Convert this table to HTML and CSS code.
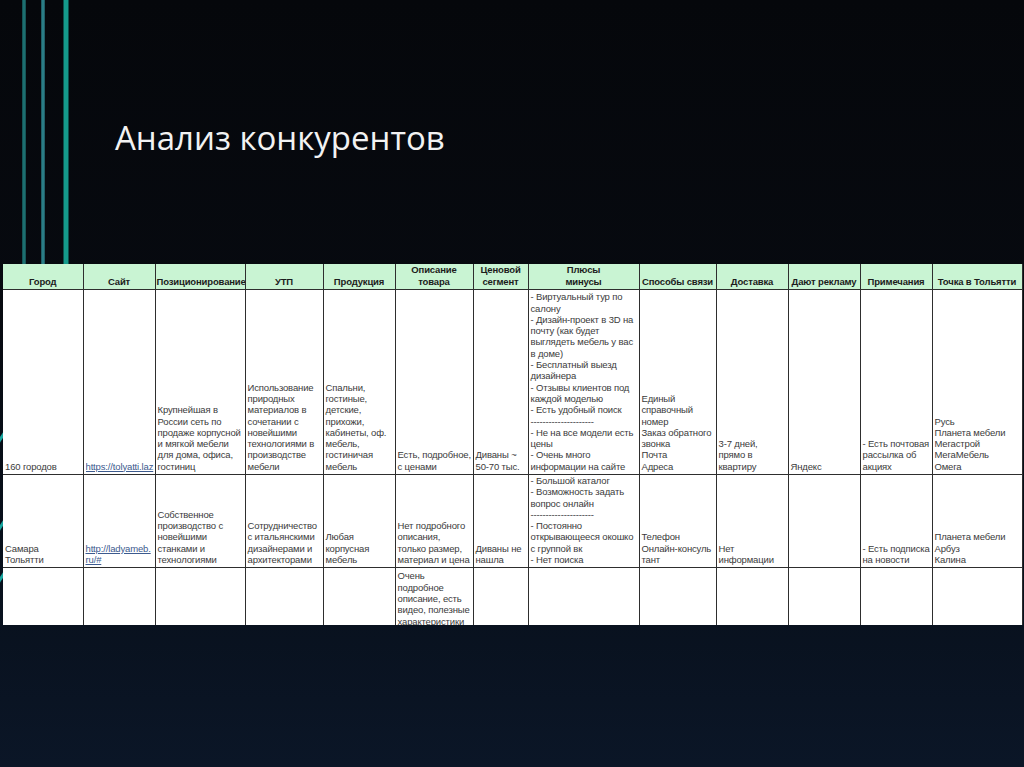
FILE: index.html
```html
<!DOCTYPE html>
<html lang="ru">
<head>
<meta charset="utf-8">
<title>Анализ конкурентов</title>
<link rel="stylesheet" href="styles.css">
</head>
<body>
<div class="slide">
  <svg class="deco" width="1024" height="767" viewBox="0 0 1024 767" aria-hidden="true">
    <line x1="24" y1="0" x2="24" y2="265" stroke="#1c6f70" stroke-width="3.5"/>
    <line x1="43" y1="0" x2="43" y2="265" stroke="#2a7d86" stroke-width="3.5"/>
    <line x1="66" y1="0" x2="66" y2="265" stroke="#159a8b" stroke-width="5"/>
    <line x1="-8" y1="452" x2="14" y2="418" stroke="#18a6a0" stroke-width="3"/>
    <line x1="-8" y1="540" x2="14" y2="506" stroke="#18a6a0" stroke-width="3"/>
    <line x1="-8" y1="592" x2="14" y2="558" stroke="#18a6a0" stroke-width="3"/>
  </svg>
  <h1 class="title">Анализ конкурентов</h1>
  <div class="table-wrap">
    <table class="grid">
      <colgroup>
        <col style="width:80px"><col style="width:72px"><col style="width:90px"><col style="width:78px">
        <col style="width:72px"><col style="width:78px"><col style="width:55px"><col style="width:111px">
        <col style="width:77px"><col style="width:72px"><col style="width:72px"><col style="width:72px">
        <col style="width:90px">
      </colgroup>
      <thead>
        <tr>
          <th>Город</th><th>Сайт</th><th>Позиционирование</th><th>УТП</th><th>Продукция</th>
          <th>Описание<br>товара</th><th>Ценовой<br>сегмент</th><th>Плюсы<br>минусы</th>
          <th>Способы связи</th><th>Доставка</th><th>Дают рекламу</th><th>Примечания</th><th>Точка в Тольятти</th>
        </tr>
      </thead>
      <tbody>
        <tr class="r1">
          <td>160 городов</td>
          <td><div class="clip"><span class="link">https://tolyatti.laz</span></div></td>
          <td>Крупнейшая в<br>России сеть по<br>продаже корпусной<br>и мягкой мебели<br>для дома, офиса,<br>гостиниц</td>
          <td>Использование<br>природных<br>материалов в<br>сочетании с<br>новейшими<br>технологиями в<br>производстве<br>мебели</td>
          <td>Спальни,<br>гостиные,<br>детские,<br>прихожи,<br>кабинеты, оф.<br>мебель,<br>гостиничая<br>мебель</td>
          <td>Есть, подробное,<br>с ценами</td>
          <td>Диваны ~<br>50-70 тыс.</td>
          <td>- Виртуальный тур по<br>салону<br>- Дизайн-проект в 3D на<br>почту (как будет<br>выглядеть мебель у вас<br>в доме)<br>- Бесплатный выезд<br>дизайнера<br>- Отзывы клиентов под<br>каждой моделью<br>- Есть удобный поиск<br>---------------------<br>- Не на все модели есть<br>цены<br>- Очень много<br>информации на сайте</td>
          <td>Единый<br>справочный<br>номер<br>Заказ обратного<br>звонка<br>Почта<br>Адреса</td>
          <td>3-7 дней,<br>прямо в<br>квартиру</td>
          <td>Яндекс</td>
          <td>- Есть почтовая<br>рассылка об<br>акциях</td>
          <td>Русь<br>Планета мебели<br>Мегастрой<br>МегаМебель<br>Омега</td>
        </tr>
        <tr class="r2">
          <td>Самара<br>Тольятти</td>
          <td><span class="link">http://ladyameb.</span><br><span class="link">ru/#</span></td>
          <td>Собственное<br>производство с<br>новейшими<br>станками и<br>технологиями</td>
          <td>Сотрудничество<br>с итальянскими<br>дизайнерами и<br>архитекторами</td>
          <td>Любая<br>корпусная<br>мебель</td>
          <td>Нет подробного<br>описания,<br>только размер,<br>материал и цена</td>
          <td>Диваны не<br>нашла</td>
          <td>- Большой каталог<br>- Возможность задать<br>вопрос онлайн<br>---------------------<br>- Постоянно<br>открывающееся окошко<br>с группой вк<br>- Нет поиска</td>
          <td>Телефон<br>Онлайн-консуль<br>тант</td>
          <td>Нет<br>информации</td>
          <td></td>
          <td>- Есть подписка<br>на новости</td>
          <td>Планета мебели<br>Арбуз<br>Калина</td>
        </tr>
        <tr class="r3">
          <td></td><td></td><td></td><td></td><td></td>
          <td>Очень<br>подробное<br>описание, есть<br>видео, полезные<br>характеристики</td>
          <td></td><td></td><td></td><td></td><td></td><td></td><td></td>
        </tr>
      </tbody>
    </table>
  </div>
</div>
</body>
</html>
```

FILE: styles.css
```css
html, body {
  margin: 0;
  padding: 0;
}
body {
  width: 1024px;
  height: 767px;
  overflow: hidden;
  background: #05070b;
}
.slide {
  position: relative;
  width: 1024px;
  height: 767px;
  overflow: hidden;
  background: linear-gradient(to bottom, #05070b 0%, #070a10 40%, #08101c 75%, #0b1627 100%);
  display: flex;
  flex-direction: column;
}
.deco {
  position: absolute;
  left: 0;
  top: 0;
  z-index: 0;
}
.title {
  position: relative;
  z-index: 1;
  margin: 118px 0 0 115px;
  height: 40px;
  line-height: 40px;
  font-family: "Open Sans", "Noto Sans", sans-serif;
  font-weight: 400;
  font-size: 33px;
  color: #f2f2f2;
  white-space: nowrap;
}
.table-wrap {
  position: relative;
  z-index: 1;
  margin: 106px 0 0 3px;
  width: 1020px;
  height: 361px;
  overflow: hidden;
  background: #ffffff;
}
.grid {
  table-layout: fixed;
  border-collapse: collapse;
  width: 1019px;
  font-family: "Liberation Sans", Arial, sans-serif;
  font-size: 9.5px;
  letter-spacing: -0.15px;
  line-height: 11.3px;
  color: #3b3b3b;
}
.grid th,
.grid td {
  border: 1px solid #2e2e2e;
  padding: 0 1px 1px 2px;
  vertical-align: bottom;
  white-space: nowrap;
  overflow: hidden;
  text-align: left;
}
.grid th {
  background: #c9f4d3;
  color: #1c1c1c;
  font-weight: 700;
  text-align: center;
  height: 23px;
  padding: 0 1px 2px 1px;
  border-top: 0;
}
.grid th:first-child,
.grid td:first-child {
  border-left: 0;
}
.grid tr.r1 td {
  height: 182px;
  padding-bottom: 2px;
}
.grid tr.r2 td {
  height: 90px;
  padding-bottom: 2px;
}
.grid tr.r3 td {
  height: 120px;
  vertical-align: top;
  padding-top: 2px;
}
.clip {
  overflow: hidden;
  white-space: nowrap;
}
.link {
  color: #3c5a8e;
  text-decoration: underline;
}
```
